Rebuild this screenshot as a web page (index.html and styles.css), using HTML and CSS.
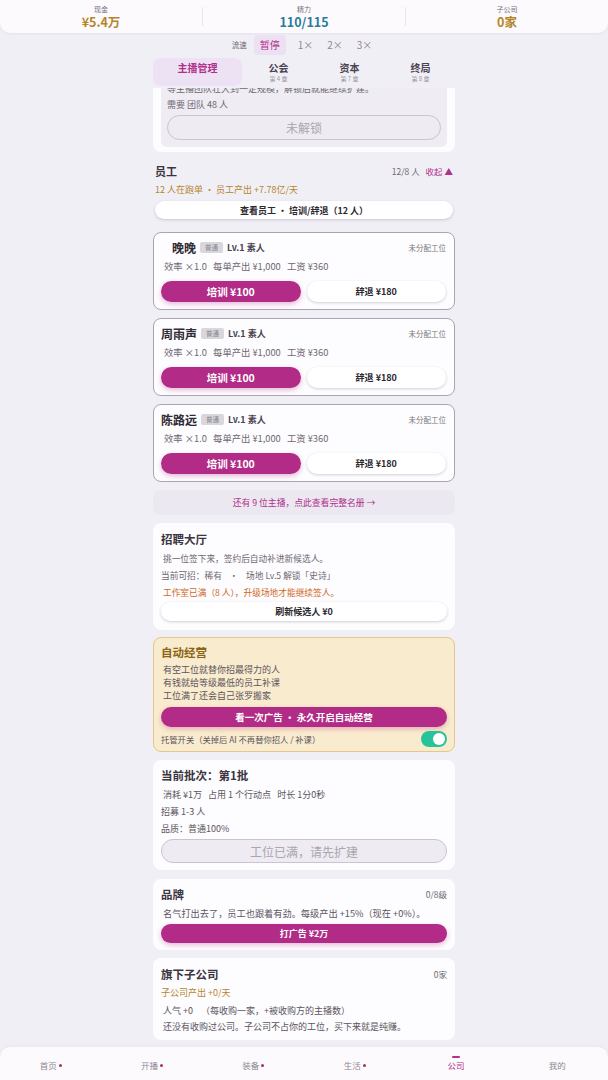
FILE: index.html
```html
<!DOCTYPE html>
<html lang="zh-CN">
<head>
    <meta charset="UTF-8">
    <meta name="viewport" content="width=device-width, initial-scale=1.0">
    <title>公司</title>
    <link rel="stylesheet" href="styles.css">
</head>
<body>
    <header class="topbar">
        <div class="stat">
            <span class="stat-label">现金</span>
            <span class="stat-value gold">¥5.4万</span>
        </div>
        <div class="stat">
            <span class="stat-label">精力</span>
            <span class="stat-value teal">110/115</span>
        </div>
        <div class="stat">
            <span class="stat-label">子公司</span>
            <span class="stat-value gold">0家</span>
        </div>
    </header>

    <div class="speed">
        <span class="speed-label">流速</span>
        <span class="speed-btn active">暂停</span>
        <span class="speed-btn">1×</span>
        <span class="speed-btn">2×</span>
        <span class="speed-btn">3×</span>
    </div>

    <nav class="tabs">
        <div class="tab active"><span class="tab-name">主播管理</span></div>
        <div class="tab"><span class="tab-name">公会</span><span class="tab-sub">第 4 章</span></div>
        <div class="tab"><span class="tab-name">资本</span><span class="tab-sub">第 7 章</span></div>
        <div class="tab"><span class="tab-name">终局</span><span class="tab-sub">第 8 章</span></div>
    </nav>

    <main class="main">
        <div class="feed">
            <!-- scrolled up, only the bottom is visible -->
            <section class="card locked-card">
                <div class="locked-box">
                    <div class="line-16 muted">等主播团队壮大到一定规模，解锁后就能继续扩建。</div>
                    <div class="line-16 muted">需要 团队 48 人</div>
                    <button class="btn-disabled locked-btn">未解锁</button>
                </div>
            </section>

            <section class="staff">
                <div class="row-between staff-head">
                    <span class="section-title">员工</span>
                    <span class="staff-count">12/8 人 <span class="pink">收起 ▲</span></span>
                </div>
                <div class="staff-sub">12 人在跑单 · 员工产出 +7.78亿/天</div>
                <button class="btn-white staff-btn">查看员工 · 培训/辞退（12 人）</button>
            </section>

            <div class="emp-list">
                <div class="emp-card">
                    <div class="row-between emp-head">
                        <div class="emp-name-row">
                            <span class="emp-name indent">晚晚</span>
                            <span class="tag">普通</span>
                            <span class="emp-level">Lv.1 素人</span>
                        </div>
                        <span class="emp-slot">未分配工位</span>
                    </div>
                    <div class="emp-stats">效率 ×1.0 &nbsp;&nbsp;每单产出 ¥1,000 &nbsp;&nbsp;工资 ¥360</div>
                    <div class="emp-actions">
                        <button class="btn-purple">培训 ¥100</button>
                        <button class="btn-white">辞退 ¥180</button>
                    </div>
                </div>
                <div class="emp-card">
                    <div class="row-between emp-head">
                        <div class="emp-name-row">
                            <span class="emp-name">周雨声</span>
                            <span class="tag">普通</span>
                            <span class="emp-level">Lv.1 素人</span>
                        </div>
                        <span class="emp-slot">未分配工位</span>
                    </div>
                    <div class="emp-stats">效率 ×1.0 &nbsp;&nbsp;每单产出 ¥1,000 &nbsp;&nbsp;工资 ¥360</div>
                    <div class="emp-actions">
                        <button class="btn-purple">培训 ¥100</button>
                        <button class="btn-white">辞退 ¥180</button>
                    </div>
                </div>
                <div class="emp-card">
                    <div class="row-between emp-head">
                        <div class="emp-name-row">
                            <span class="emp-name">陈路远</span>
                            <span class="tag">普通</span>
                            <span class="emp-level">Lv.1 素人</span>
                        </div>
                        <span class="emp-slot">未分配工位</span>
                    </div>
                    <div class="emp-stats">效率 ×1.0 &nbsp;&nbsp;每单产出 ¥1,000 &nbsp;&nbsp;工资 ¥360</div>
                    <div class="emp-actions">
                        <button class="btn-purple">培训 ¥100</button>
                        <button class="btn-white">辞退 ¥180</button>
                    </div>
                </div>
            </div>

            <div class="more-link">还有 9 位主播，点此查看完整名册 →</div>

            <section class="card recruit">
                <div class="card-title">招聘大厅</div>
                <div class="lines-17">
                    <div class="muted">&nbsp;挑一位签下来，签约后自动补进新候选人。</div>
                    <div class="muted">当前可招：稀有 &nbsp;&nbsp;&nbsp;· &nbsp;&nbsp;&nbsp;场地 Lv.5 解锁「史诗」</div>
                    <div class="orange">&nbsp;工作室已满（8 人），升级场地才能继续签人。</div>
                </div>
                <button class="btn-white recruit-btn">刷新候选人 ¥0</button>
            </section>

            <section class="card auto">
                <div class="card-title auto-title">自动经营</div>
                <div class="auto-lines">
                    <div>有空工位就替你招最得力的人</div>
                    <div>有钱就给等级最低的员工补课</div>
                    <div>工位满了还会自己张罗搬家</div>
                </div>
                <button class="btn-purple auto-btn">看一次广告 · 永久开启自动经营</button>
                <div class="row-between auto-toggle-row">
                    <span class="auto-toggle-text">托管开关（关掉后 AI 不再替你招人 / 补课）</span>
                    <span class="toggle"><span class="knob"></span></span>
                </div>
            </section>

            <section class="card batch">
                <div class="card-title">当前批次：第1批</div>
                <div class="lines-17 small">
                    <div>&nbsp;消耗 ¥1万 &nbsp;&nbsp;占用 1 个行动点 &nbsp;&nbsp;时长 1分0秒</div>
                    <div>招募 1-3 人</div>
                    <div>品质：普通100%</div>
                </div>
                <button class="btn-disabled batch-btn">工位已满，请先扩建</button>
            </section>

            <section class="card brand">
                <div class="row-between">
                    <span class="card-title">品牌</span>
                    <span class="side-note">0/8级</span>
                </div>
                <div class="brand-text">&nbsp;名气打出去了，员工也跟着有劲。每级产出 +15%（现在 +0%）。</div>
                <button class="btn-purple brand-btn">打广告 ¥2万</button>
            </section>

            <section class="card subs">
                <div class="row-between">
                    <span class="card-title">旗下子公司</span>
                    <span class="side-note">0家</span>
                </div>
                <div class="subs-gold">子公司产出 +0/天</div>
                <div class="subs-lines">
                    <div>&nbsp;人气 +0 &nbsp;&nbsp;&nbsp;（每收购一家，+被收购方的主播数）</div>
                    <div>&nbsp;还没有收购过公司。子公司不占你的工位，买下来就是纯赚。</div>
                </div>
            </section>
        </div>
    </main>

    <footer class="bottom-nav">
        <div class="nav-item">首页<span class="dot"></span></div>
        <div class="nav-item">开播<span class="dot"></span></div>
        <div class="nav-item">装备<span class="dot"></span></div>
        <div class="nav-item">生活<span class="dot"></span></div>
        <div class="nav-item active"><span class="nav-bar"></span>公司</div>
        <div class="nav-item">我的</div>
    </footer>
</body>
</html>
```

FILE: styles.css
```css
* {
    box-sizing: border-box;
}

html, body {
    margin: 0;
    padding: 0;
}

body {
    width: 608px;
    height: 1080px;
    display: flex;
    flex-direction: column;
    overflow: hidden;
    background: #f1eff6;
    color: #3a3540;
    font-family: "Noto Sans CJK SC", "Noto Sans", sans-serif;
}

button {
    font-family: inherit;
    border: none;
    padding: 0;
    cursor: pointer;
}

/* top stats */
.topbar {
    height: 33px;
    flex-shrink: 0;
    display: flex;
    background: #fcfafd;
    border-radius: 0 0 10px 10px;
    box-shadow: 0 1px 3px rgba(80, 60, 100, 0.08);
}
.stat {
    flex: 1;
    display: flex;
    flex-direction: column;
    align-items: center;
    justify-content: center;
    border-left: 1px solid #ebe7ef;
    margin: 7px 0;
}
.stat:first-child {
    border-left: none;
}
.stat-label {
    font-size: 7px;
    line-height: 9px;
    color: #77717d;
}
.stat-value {
    font-size: 12.5px;
    line-height: 15px;
    font-weight: 700;
}
.gold { color: #b5852c; }
.teal { color: #2a7d97; }
.pink { color: #b0308a; }

/* speed */
.speed {
    height: 23px;
    flex-shrink: 0;
    display: flex;
    justify-content: center;
    align-items: center;
    gap: 2px;
    padding-left: 2px;
}
.speed-label {
    font-size: 7.5px;
    color: #6f6975;
    margin-right: 5px;
}
.speed-btn {
    font-size: 10px;
    color: #8e8894;
    padding: 0 6px;
    height: 20px;
    line-height: 20px;
    border-radius: 4px;
}
.speed-btn.active {
    background: #ece1f3;
    color: #b0308a;
    margin-right: 4px;
}

/* tabs */
.tabs {
    height: 32px;
    flex-shrink: 0;
    width: 302px;
    margin: 0 auto;
    display: flex;
    align-items: center;
    gap: 2px;
}
.tab {
    flex: 1 1 auto;
    height: 28px;
    display: flex;
    flex-direction: column;
    align-items: center;
    justify-content: center;
    border-radius: 7px;
}
.tab.active {
    background: #ece2f4;
    justify-content: flex-start;
    padding-top: 3px;
}
.tab-name {
    font-size: 10px;
    line-height: 13px;
    font-weight: 700;
    color: #4a4450;
}
.tab.active .tab-name {
    color: #b0308a;
}
.tab-sub {
    font-size: 6px;
    line-height: 9px;
    color: #9a949f;
}

/* scrolling area */
.main {
    flex: 1;
    overflow: hidden;
}
.feed {
    width: 302px;
    margin: -35px auto 0;
}

.card {
    background: #fdfcfe;
    border-radius: 8px;
}
.row-between {
    display: flex;
    justify-content: space-between;
    align-items: center;
}
.line-16 {
    font-size: 9px;
    line-height: 16px;
}
.muted { color: #6d6772; }
.orange { color: #cf6a26; }

.btn-white {
    background: #fff;
    color: #2c2830;
    font-weight: 700;
    border-radius: 12px;
    box-shadow: 0 1px 3px rgba(60, 40, 80, 0.22);
}
.btn-purple {
    background: #b22b87;
    color: #fff;
    font-weight: 700;
    border-radius: 12px;
    box-shadow: 0 2px 5px rgba(178, 43, 135, 0.32);
}
.btn-disabled {
    background: #eeebf2;
    color: #aaa5b0;
    border: 1px solid #c9c4cf;
    border-radius: 13px;
    font-size: 12px;
}

/* locked card (scrolled mostly out of view) */
.locked-card {
    padding: 6px 8px 5px;
}
.locked-box {
    background: #efedf3;
    border-radius: 6px;
    padding: 22px 6px 7px;
    display: flex;
    flex-direction: column;
}
.locked-btn {
    margin-top: 2px;
    height: 25px;
}

/* staff */
.staff {
    margin-top: 10px;
    padding: 0 2px;
    display: flex;
    flex-direction: column;
}
.staff-head {
    height: 18px;
}
.section-title {
    font-size: 11px;
    font-weight: 700;
    color: #3a3540;
}
.staff-count {
    font-size: 8.5px;
    color: #6f6975;
}
.staff-count .pink {
    margin-left: 4px;
}
.staff-sub {
    margin-top: 2px;
    font-size: 9px;
    line-height: 16px;
    color: #b5852c;
}
.staff-btn {
    margin-top: 3px;
    height: 18px;
    font-size: 9px;
}

.emp-list {
    margin-top: 13px;
    display: flex;
    flex-direction: column;
    gap: 8px;
}
.emp-card {
    height: 78px;
    background: #fdfcfe;
    border: 1px solid #aaa5b0;
    border-radius: 8px;
    padding: 6px 8px 6px 7px;
}
.emp-head {
    height: 16px;
}
.emp-name-row {
    display: flex;
    align-items: center;
}
.emp-name {
    font-size: 12px;
    font-weight: 700;
    color: #2f2a34;
}
.emp-name.indent {
    margin-left: 11px;
}
.tag {
    margin-left: 4px;
    background: #d9d7dc;
    color: #8a8590;
    font-size: 6.5px;
    padding: 0 5px;
    height: 11px;
    line-height: 11px;
    border-radius: 2px;
}
.emp-level {
    margin-left: 4px;
    font-size: 9px;
    font-weight: 700;
    color: #4a4450;
}
.emp-slot {
    font-size: 7.5px;
    color: #7a7480;
}
.emp-stats {
    margin-top: 3px;
    padding-left: 3px;
    font-size: 9.3px;
    line-height: 16px;
    color: #6d6772;
}
.emp-actions {
    margin-top: 7px;
    display: flex;
    gap: 6px;
}
.emp-actions button {
    flex: 1;
    height: 21px;
    border-radius: 11px;
}
.emp-actions .btn-purple {
    font-size: 10.5px;
}
.emp-actions .btn-white {
    font-size: 9px;
}

.more-link {
    margin-top: 8px;
    height: 25px;
    line-height: 25px;
    text-align: center;
    background: #ebe8f1;
    border-radius: 7px;
    font-size: 8.8px;
    color: #b0308a;
}

/* recruit */
.recruit {
    margin-top: 8px;
    padding: 8px 8px 9px;
    display: flex;
    flex-direction: column;
}
.card-title {
    font-size: 11.5px;
    line-height: 16px;
    font-weight: 700;
    color: #3a3540;
}
.lines-17 {
    margin-top: 3px;
    font-size: 8.7px;
    line-height: 17px;
}
.recruit-btn {
    margin-top: 1px;
    height: 19px;
    font-size: 9px;
}

/* auto */
.auto {
    margin-top: 7px;
    background: #f9ebcd;
    border: 1px solid #e3c78c;
    padding: 6px 7px 4px;
    display: flex;
    flex-direction: column;
}
.auto-title {
    color: #8b6415;
}
.auto-lines {
    margin-top: 3px;
    padding-left: 2px;
    font-size: 9px;
    line-height: 13px;
    color: #5b5560;
}
.auto-btn {
    margin-top: 5px;
    height: 20px;
    font-size: 9.5px;
}
.auto-toggle-row {
    margin-top: 4px;
    height: 16px;
}
.auto-toggle-text {
    font-size: 8.3px;
    color: #5b5560;
}
.toggle {
    width: 26px;
    height: 16px;
    border-radius: 8px;
    background: #27c49b;
    display: flex;
    align-items: center;
    justify-content: flex-end;
    padding: 0 2px;
}
.knob {
    width: 12px;
    height: 12px;
    border-radius: 50%;
    background: #fff;
}

/* batch */
.batch {
    margin-top: 8px;
    padding: 7px 8px 7px;
    display: flex;
    flex-direction: column;
}
.lines-17.small {
    color: #5b5560;
    font-size: 9px;
}
.batch-btn {
    margin-top: 2px;
    height: 24px;
}

/* brand */
.brand {
    margin-top: 9px;
    padding: 7px 8px 7px;
    display: flex;
    flex-direction: column;
}
.side-note {
    font-size: 8.5px;
    color: #6f6975;
}
.brand-text {
    margin-top: 3px;
    font-size: 9.2px;
    line-height: 16px;
    color: #5b5560;
}
.brand-btn {
    margin-top: 3px;
    height: 19px;
    font-size: 9px;
}

/* subsidiaries */
.subs {
    margin-top: 8px;
    padding: 8px 8px 5px;
}
.subs-gold {
    margin-top: 3px;
    font-size: 9px;
    line-height: 16px;
    color: #b5852c;
}
.subs-lines {
    margin-top: 2px;
    font-size: 9px;
    line-height: 16px;
    color: #5b5560;
}

/* bottom nav */
.bottom-nav {
    height: 33px;
    flex-shrink: 0;
    display: flex;
    background: #fcfafd;
    border-radius: 10px 10px 0 0;
    box-shadow: 0 -1px 3px rgba(80, 60, 100, 0.06);
}
.nav-item {
    flex: 1;
    position: relative;
    display: flex;
    align-items: center;
    justify-content: center;
    font-size: 8.5px;
    color: #8e8894;
    padding-top: 3px;
}
.nav-item.active {
    color: #b0308a;
}
.dot {
    width: 3px;
    height: 3px;
    border-radius: 50%;
    background: #a8305a;
    margin-left: 2px;
}
.nav-bar {
    position: absolute;
    top: 9px;
    left: 50%;
    width: 8px;
    margin-left: -4px;
    height: 1.5px;
    background: #b0308a;
    border-radius: 1px;
}
```
